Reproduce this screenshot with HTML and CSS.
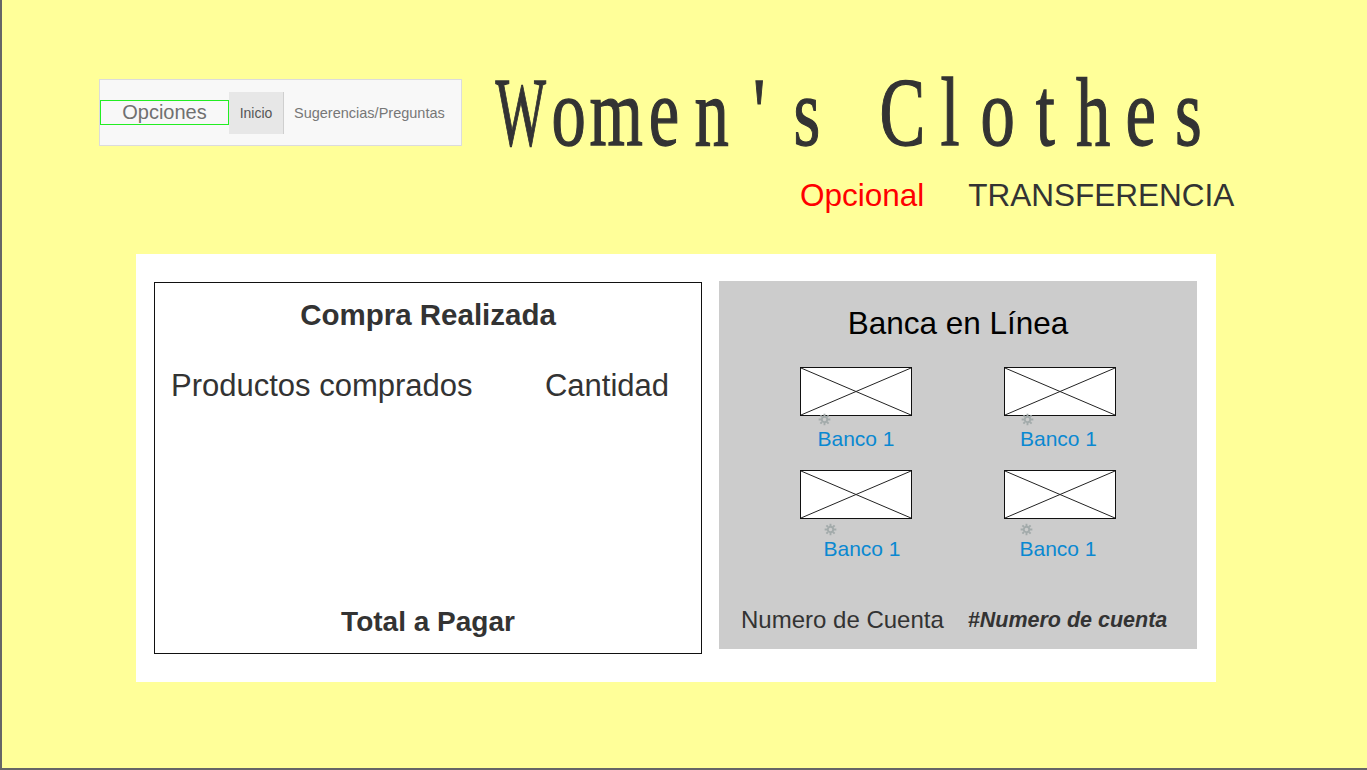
FILE: index.html
```html
<!DOCTYPE html>
<html lang="es">
<head>
<meta charset="utf-8">
<title>Women's Clothes</title>
<link rel="stylesheet" href="styles.css">
</head>
<body>
<div class="page">
  <header class="top">
    <nav class="nav">
      <span class="nav-options">Opciones</span>
      <a class="nav-item nav-item--active">Inicio</a>
      <a class="nav-item">Sugerencias/Preguntas</a>
    </nav>
    <div class="brand">
      <h1 class="brand-title"><span class="brand-inner"><span class="ch ch--narrow">W</span><span class="ch">o</span><span class="ch">m</span><span class="ch">e</span><span class="ch">n</span><span class="ch">'</span><span class="ch">s</span><span class="ch"> </span><span class="ch">C</span><span class="ch">l</span><span class="ch">o</span><span class="ch">t</span><span class="ch">h</span><span class="ch">e</span><span class="ch">s</span></span></h1>
      <div class="brand-sub">
        <span class="brand-opt">Opcional</span>
        <span class="brand-mode">TRANSFERENCIA</span>
      </div>
    </div>
  </header>

  <main class="panel">
    <section class="compra">
      <h2 class="compra-title">Compra Realizada</h2>
      <div class="compra-cols">
        <span>Productos comprados</span>
        <span>Cantidad</span>
      </div>
      <div class="compra-total">Total a Pagar</div>
    </section>

    <section class="banca">
      <h2 class="banca-title">Banca en Línea</h2>
      <div class="banks">
        <div class="bank">
          <div class="bank-img"><svg viewBox="0 0 110 47" preserveAspectRatio="none"><line x1="0" y1="0" x2="110" y2="47"/><line x1="0" y1="47" x2="110" y2="0"/></svg></div>
          <span class="bank-label"><svg class="gear" viewBox="0 0 12 12"><circle cx="6" cy="6" r="2.5"/><path d="M6 0.6v2.2M6 9.2v2.2M0.6 6h2.2M9.2 6h2.2M2.2 2.2l1.5 1.5M8.3 8.3l1.5 1.5M2.2 9.8l1.5-1.5M8.3 3.7l1.5-1.5"/></svg>Banco 1</span>
        </div>
        <div class="bank">
          <div class="bank-img"><svg viewBox="0 0 110 47" preserveAspectRatio="none"><line x1="0" y1="0" x2="110" y2="47"/><line x1="0" y1="47" x2="110" y2="0"/></svg></div>
          <span class="bank-label bank-label--pull"><svg class="gear" viewBox="0 0 12 12"><circle cx="6" cy="6" r="2.5"/><path d="M6 0.6v2.2M6 9.2v2.2M0.6 6h2.2M9.2 6h2.2M2.2 2.2l1.5 1.5M8.3 8.3l1.5 1.5M2.2 9.8l1.5-1.5M8.3 3.7l1.5-1.5"/></svg>Banco 1</span>
        </div>
        <div class="bank">
          <div class="bank-img"><svg viewBox="0 0 110 47" preserveAspectRatio="none"><line x1="0" y1="0" x2="110" y2="47"/><line x1="0" y1="47" x2="110" y2="0"/></svg></div>
          <span class="bank-label bank-label--low bank-label--shift"><svg class="gear" viewBox="0 0 12 12"><circle cx="6" cy="6" r="2.5"/><path d="M6 0.6v2.2M6 9.2v2.2M0.6 6h2.2M9.2 6h2.2M2.2 2.2l1.5 1.5M8.3 8.3l1.5 1.5M2.2 9.8l1.5-1.5M8.3 3.7l1.5-1.5"/></svg>Banco 1</span>
        </div>
        <div class="bank bank--left">
          <div class="bank-img"><svg viewBox="0 0 110 47" preserveAspectRatio="none"><line x1="0" y1="0" x2="110" y2="47"/><line x1="0" y1="47" x2="110" y2="0"/></svg></div>
          <span class="bank-label bank-label--low bank-label--pull"><svg class="gear" viewBox="0 0 12 12"><circle cx="6" cy="6" r="2.5"/><path d="M6 0.6v2.2M6 9.2v2.2M0.6 6h2.2M9.2 6h2.2M2.2 2.2l1.5 1.5M8.3 8.3l1.5 1.5M2.2 9.8l1.5-1.5M8.3 3.7l1.5-1.5"/></svg>Banco 1</span>
        </div>
      </div>
      <div class="account">
        <span class="account-label">Numero de Cuenta</span>
        <span class="account-value">#Numero de cuenta</span>
      </div>
    </section>
  </main>
</div>
</body>
</html>
```

FILE: styles.css
```css
* { box-sizing: border-box; }

html, body {
  margin: 0;
  padding: 0;
  background: #ffff99;
}

body {
  font-family: "Liberation Sans", Arial, sans-serif;
  color: #333;
}

.page {
  height: 770px;
  border-left: 2px solid #666;
  border-bottom: 2px solid #666;
  background: #ffff99;
  overflow: hidden;
}

/* ---------- header ---------- */
.top {
  display: flex;
  align-items: flex-start;
  padding: 79px 0 0 97px;
}

.nav {
  flex: none;
  width: 363px;
  height: 67px;
  background: #f8f8f8;
  border: 1px solid #dcdcdc;
  display: flex;
  align-items: center;
}

.nav-options {
  width: 129px;
  height: 25px;
  border: 1px solid #22ee22;
  display: flex;
  align-items: center;
  justify-content: center;
  font-size: 20px;
  color: #707070;
  line-height: 23px;
}

.nav-item {
  font-size: 14.5px;
  color: #777;
  padding-left: 10px;
  white-space: nowrap;
}

.nav-item--active {
  width: 55px;
  height: 42px;
  padding: 0;
  background: #e7e7e7;
  border-right: 1px solid #cfcfcf;
  color: #555;
  font-size: 14px;
  display: flex;
  align-items: center;
  justify-content: center;
}

.brand {
  flex: none;
  margin-left: 35px;
}

.brand-title {
  margin: -7px 0 0 0;
  width: 716px;
  height: 80px;
  font-family: "Liberation Serif", "Times New Roman", serif;
  font-weight: normal;
  font-size: 98px;
  line-height: 80px;
  color: #333;
  white-space: nowrap;
}

.brand-inner {
  display: inline-block;
  transform: scaleX(0.7);
  transform-origin: 0 0;
  white-space: pre;
  -webkit-text-stroke: 1.3px #333;
}

.ch {
  display: inline-flex;
  justify-content: center;
  width: 68.14px;
}

.ch--narrow {
  transform: scaleX(0.78);
}

.brand-sub {
  margin-top: 25px;
  padding-left: 303px;
  display: flex;
  gap: 44px;
  font-size: 31.5px;
  line-height: 36px;
  white-space: nowrap;
}

.brand-opt { color: #ff0000; }
.brand-mode { color: #333; }

/* ---------- panel ---------- */
.panel {
  margin: 41px 0 0 134px;
  width: 1080px;
  height: 428px;
  background: #fff;
  display: flex;
  align-items: flex-start;
  gap: 17px;
  padding: 27px 0 0 18px;
}

.compra {
  width: 548px;
  height: 372px;
  margin-top: 1px;
  border: 1px solid #111;
  display: flex;
  flex-direction: column;
}

.compra-title {
  margin: 16px 0 0 0;
  text-align: center;
  font-size: 29.5px;
  line-height: 32px;
  font-weight: bold;
  color: #333;
}

.compra-cols {
  margin-top: 38px;
  display: flex;
  justify-content: space-between;
  padding: 0 32px 0 16px;
  font-size: 31px;
  line-height: 34px;
  color: #333;
}

.compra-total {
  margin-top: auto;
  margin-bottom: 15px;
  text-align: center;
  font-size: 28px;
  line-height: 32px;
  font-weight: bold;
  color: #333;
}

.banca {
  width: 478px;
  height: 368px;
  background: #cccccc;
  display: flex;
  flex-direction: column;
}

.banca-title {
  margin: 24px 0 0 0;
  text-align: center;
  font-weight: normal;
  font-size: 31.5px;
  line-height: 36px;
  color: #000;
}

.banks {
  margin-top: 26px;
  padding-left: 81px;
  display: grid;
  grid-template-columns: 112px 112px;
  column-gap: 92px;
  row-gap: 19px;
}

.bank {
  display: flex;
  flex-direction: column;
  align-items: center;
}

.bank--left { margin-left: -1px; }

.bank-img {
  width: 112px;
  height: 49px;
  background: #fff;
  border: 1px solid #111;
}

.bank-img svg {
  display: block;
  width: 100%;
  height: 100%;
}

.bank-img line {
  stroke: #222;
  stroke-width: 1;
  vector-effect: non-scaling-stroke;
}

.bank-label {
  position: relative;
  margin-top: 11px;
  font-size: 21px;
  line-height: 24px;
  color: #0a88d1;
  white-space: nowrap;
}

.bank-label--low { margin-top: 18px; }
.bank-label--shift { margin-left: 12px; }
.bank-label--pull { margin-right: 3px; }

.gear {
  position: absolute;
  left: 1px;
  top: -14px;
  width: 13px;
  height: 13px;
  fill: none;
  stroke: #a3abab;
  stroke-width: 1.7;
}

.account {
  margin-top: auto;
  margin-bottom: 15px;
  padding-left: 22px;
  display: flex;
  align-items: center;
  gap: 24px;
  white-space: nowrap;
}

.account-label {
  font-size: 24px;
  line-height: 28px;
  color: #333;
}

.account-value {
  font-size: 21.5px;
  line-height: 28px;
  font-weight: bold;
  font-style: italic;
  color: #333;
}
```
